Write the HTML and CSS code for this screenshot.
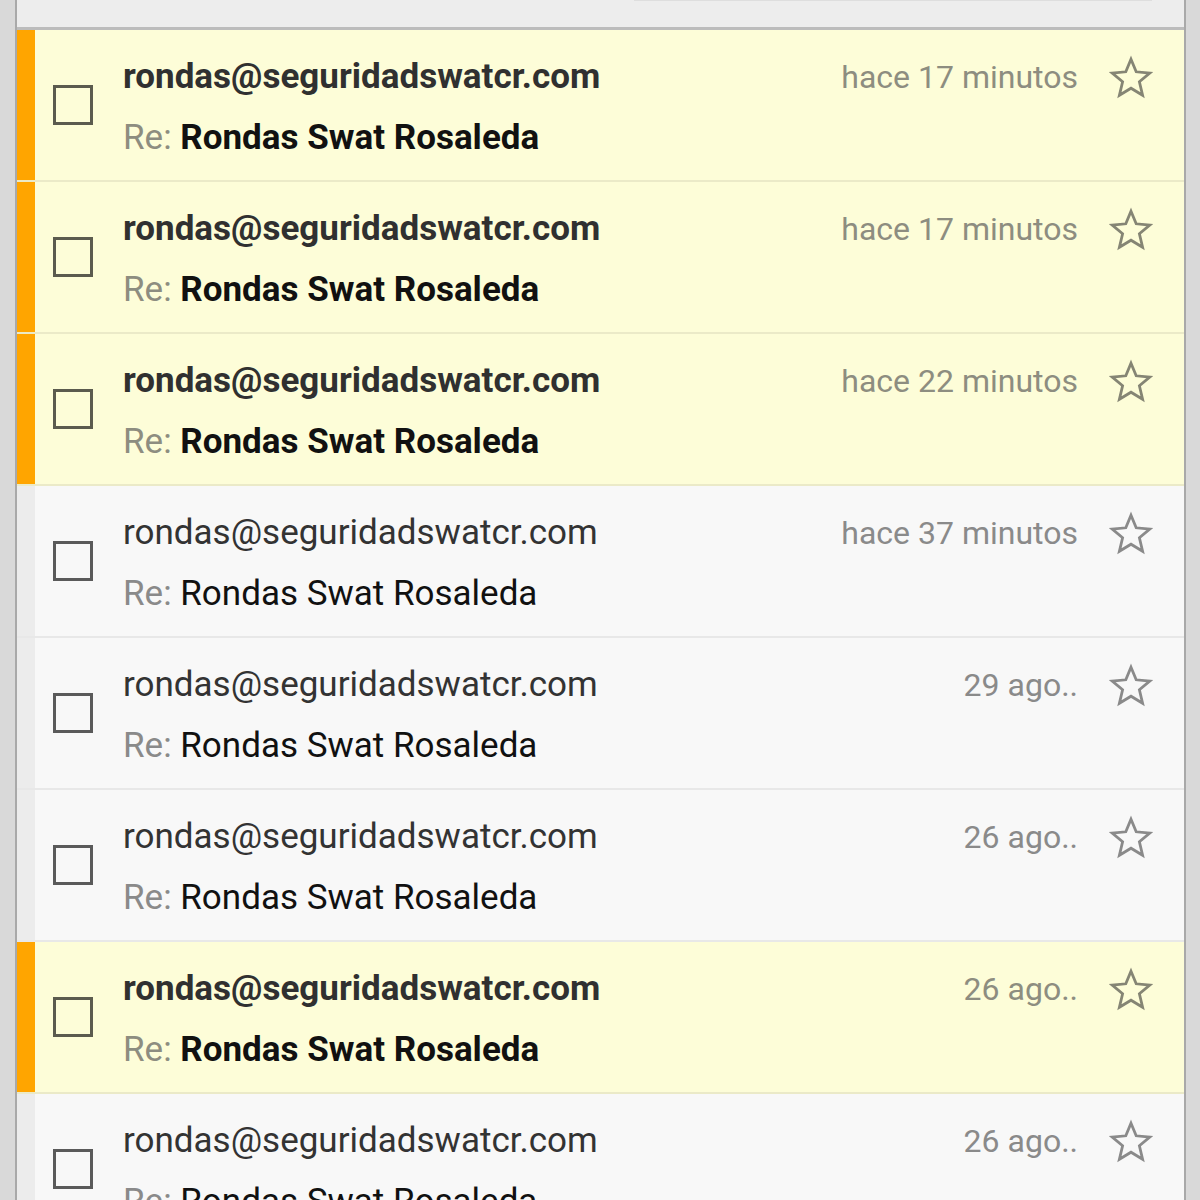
FILE: index.html
```html
<!DOCTYPE html>
<html lang="es">
<head>
<meta charset="utf-8">
<title>Bandeja</title>
<link rel="stylesheet" href="styles.css">
</head>
<body>
<div class="frame">
  <div class="header"><div class="search-edge"></div></div>
  <div class="list">
    <div class="row unread">
      <div class="strip"></div>
      <div class="check"></div>
      <div class="content">
        <div class="line1"><span class="sender">rondas@seguridadswatcr.com</span><span class="date">hace 17 minutos</span></div>
        <div class="line2"><span class="re">Re: </span><span class="subject">Rondas Swat Rosaleda</span></div>
      </div>
      <svg class="star" viewBox="0 0 24 24" width="48" height="48"><polygon points="12,2.6 14.6,8.9 21.4,9.5 16.2,13.9 17.8,20.6 12,17.1 6.2,20.6 7.8,13.9 2.6,9.5 9.4,8.9"/></svg>
    </div>
    <div class="row unread">
      <div class="strip"></div>
      <div class="check"></div>
      <div class="content">
        <div class="line1"><span class="sender">rondas@seguridadswatcr.com</span><span class="date">hace 17 minutos</span></div>
        <div class="line2"><span class="re">Re: </span><span class="subject">Rondas Swat Rosaleda</span></div>
      </div>
      <svg class="star" viewBox="0 0 24 24" width="48" height="48"><polygon points="12,2.6 14.6,8.9 21.4,9.5 16.2,13.9 17.8,20.6 12,17.1 6.2,20.6 7.8,13.9 2.6,9.5 9.4,8.9"/></svg>
    </div>
    <div class="row unread">
      <div class="strip"></div>
      <div class="check"></div>
      <div class="content">
        <div class="line1"><span class="sender">rondas@seguridadswatcr.com</span><span class="date">hace 22 minutos</span></div>
        <div class="line2"><span class="re">Re: </span><span class="subject">Rondas Swat Rosaleda</span></div>
      </div>
      <svg class="star" viewBox="0 0 24 24" width="48" height="48"><polygon points="12,2.6 14.6,8.9 21.4,9.5 16.2,13.9 17.8,20.6 12,17.1 6.2,20.6 7.8,13.9 2.6,9.5 9.4,8.9"/></svg>
    </div>
    <div class="row read">
      <div class="strip"></div>
      <div class="check"></div>
      <div class="content">
        <div class="line1"><span class="sender">rondas@seguridadswatcr.com</span><span class="date">hace 37 minutos</span></div>
        <div class="line2"><span class="re">Re: </span><span class="subject">Rondas Swat Rosaleda</span></div>
      </div>
      <svg class="star" viewBox="0 0 24 24" width="48" height="48"><polygon points="12,2.6 14.6,8.9 21.4,9.5 16.2,13.9 17.8,20.6 12,17.1 6.2,20.6 7.8,13.9 2.6,9.5 9.4,8.9"/></svg>
    </div>
    <div class="row read">
      <div class="strip"></div>
      <div class="check"></div>
      <div class="content">
        <div class="line1"><span class="sender">rondas@seguridadswatcr.com</span><span class="date">29 ago..</span></div>
        <div class="line2"><span class="re">Re: </span><span class="subject">Rondas Swat Rosaleda</span></div>
      </div>
      <svg class="star" viewBox="0 0 24 24" width="48" height="48"><polygon points="12,2.6 14.6,8.9 21.4,9.5 16.2,13.9 17.8,20.6 12,17.1 6.2,20.6 7.8,13.9 2.6,9.5 9.4,8.9"/></svg>
    </div>
    <div class="row read">
      <div class="strip"></div>
      <div class="check"></div>
      <div class="content">
        <div class="line1"><span class="sender">rondas@seguridadswatcr.com</span><span class="date">26 ago..</span></div>
        <div class="line2"><span class="re">Re: </span><span class="subject">Rondas Swat Rosaleda</span></div>
      </div>
      <svg class="star" viewBox="0 0 24 24" width="48" height="48"><polygon points="12,2.6 14.6,8.9 21.4,9.5 16.2,13.9 17.8,20.6 12,17.1 6.2,20.6 7.8,13.9 2.6,9.5 9.4,8.9"/></svg>
    </div>
    <div class="row unread">
      <div class="strip"></div>
      <div class="check"></div>
      <div class="content">
        <div class="line1"><span class="sender">rondas@seguridadswatcr.com</span><span class="date">26 ago..</span></div>
        <div class="line2"><span class="re">Re: </span><span class="subject">Rondas Swat Rosaleda</span></div>
      </div>
      <svg class="star" viewBox="0 0 24 24" width="48" height="48"><polygon points="12,2.6 14.6,8.9 21.4,9.5 16.2,13.9 17.8,20.6 12,17.1 6.2,20.6 7.8,13.9 2.6,9.5 9.4,8.9"/></svg>
    </div>
    <div class="row read">
      <div class="strip"></div>
      <div class="check"></div>
      <div class="content">
        <div class="line1"><span class="sender">rondas@seguridadswatcr.com</span><span class="date">26 ago..</span></div>
        <div class="line2"><span class="re">Re: </span><span class="subject">Rondas Swat Rosaleda</span></div>
      </div>
      <svg class="star" viewBox="0 0 24 24" width="48" height="48"><polygon points="12,2.6 14.6,8.9 21.4,9.5 16.2,13.9 17.8,20.6 12,17.1 6.2,20.6 7.8,13.9 2.6,9.5 9.4,8.9"/></svg>
    </div>
  </div>
</div>
</body>
</html>
```
FILE: styles.css
```css
html, body {
  margin: 0;
  padding: 0;
}
body {
  background: #d9d9d9;
  font-family: Roboto, "Liberation Sans", sans-serif;
  height: 1200px;
  overflow: hidden;
}
.frame {
  margin-left: 15px;
  width: 1167px;
  border-left: 2px solid #a9a9a9;
  border-right: 2px solid #a9a9a9;
  background: #f8f8f8;
  min-height: 1200px;
}
.header {
  height: 27px;
  background: #ededed;
  border-bottom: 3px solid #bcbcbc;
  display: flex;
  justify-content: flex-end;
}
.search-edge {
  width: 518px;
  height: 1px;
  margin-right: 32px;
  background: #dedede;
}
.row {
  display: flex;
  align-items: flex-start;
  height: 150px;
  border-bottom: 2px solid #e8e8e8;
}
.row.unread {
  background: #fdfdd8;
  border-bottom-color: #ebeac8;
}
.strip {
  width: 18px;
  align-self: stretch;
  background: #ececec;
}
.unread .strip {
  background: #ffa500;
}
.check {
  align-self: center;
  width: 34px;
  height: 34px;
  margin-left: 18px;
  margin-right: 30px;
  border: 3px solid #5a5a5a;
}
.unread .check {
  border-color: #5b5b4e;
}
.content {
  flex: 1;
  padding-top: 16px;
}
.line1 {
  display: flex;
  align-items: baseline;
  height: 61px;
  line-height: 61px;
}
.line2 {
  height: 61px;
  line-height: 61px;
}
.sender {
  flex: 1;
  font-size: 35px;
  color: #333333;
}
.unread .sender {
  font-weight: 700;
  color: #303030;
}
.date {
  font-size: 32px;
  color: #8a8a8a;
}
.unread .date {
  color: #8d8d80;
}
.re {
  font-size: 35px;
  color: #8a8a8a;
  white-space: pre;
}
.unread .re {
  color: #8d8d80;
}
.subject {
  font-size: 35px;
  color: #111111;
}
.unread .subject {
  font-weight: 700;
}
.star {
  margin-top: 24px;
  margin-left: 29px;
  margin-right: 29px;
  fill: none;
  stroke: #8a8a8a;
  stroke-width: 1.4;
  stroke-linejoin: miter;
}
.unread .star {
  stroke: #858574;
}
```
